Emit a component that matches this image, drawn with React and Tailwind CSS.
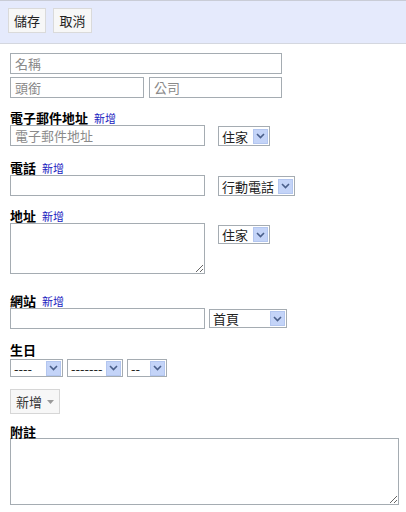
import React from "react";

const font = { fontFamily: '"Noto Sans CJK TC", "Noto Sans", sans-serif' };

function Arrow() {
  return (
    <span className="flex h-[15px] w-[15px] items-center justify-center bg-[#c4d4f8] border border-[#b3c6ef]">
      <svg width="9" height="6" viewBox="0 0 9 6">
        <path d="M1 1l3.5 3.5L8 1" fill="none" stroke="#4a5f8a" strokeWidth="1.6" />
      </svg>
    </span>
  );
}

function FakeSelect({ label, className }) {
  return (
    <div
      className={`flex items-center justify-between border border-[#a5acb2] bg-white pl-[3px] pr-[1px] text-[13px] leading-none text-[#222] ${className}`}
    >
      <span>{label}</span>
      <Arrow />
    </div>
  );
}

function TextBox({ placeholder, className }) {
  return (
    <input
      placeholder={placeholder}
      className={`h-[21px] border border-[#a5acb2] bg-white px-[4px] text-[13px] text-[#222] placeholder:text-[#8a8a8a] outline-none ${className}`}
    />
  );
}

function Label({ text, add }) {
  return (
    <div className="flex h-[15px] items-end gap-[6px] leading-none">
      <span className="text-[13px] font-bold text-black">{text}</span>
      {add && <span className="text-[11px] text-[#2020c0]">新增</span>}
    </div>
  );
}

export default function App() {
  return (
    <div className="h-[512px] w-[406px] bg-white" style={font}>
      {/* toolbar */}
      <div className="flex h-[44px] gap-[7px] border-t border-b border-t-[#c9ccd6] border-b-[#d4d7df] bg-[#e5eafc] pl-[8px] pt-[7px]">
        <button className="h-[25px] w-[38px] border border-[#dadada] bg-[#f7f7f7] text-[13px] text-[#222]">儲存</button>
        <button className="h-[25px] w-[39px] border border-[#dadada] bg-[#f7f7f7] text-[13px] text-[#222]">取消</button>
      </div>

      <div className="flex flex-col pl-[10px] pt-[9px]">
        <TextBox placeholder="名稱" className="w-[272px]" />
        <div className="mt-[3px] flex">
          <TextBox placeholder="頭銜" className="w-[134px]" />
          <TextBox placeholder="公司" className="ml-[5px] w-[133px]" />
        </div>

        {/* email */}
        <div className="mt-[11px]">
          <Label text="電子郵件地址" add />
          <div className="mt-[1px] flex items-start">
            <TextBox placeholder="電子郵件地址" className="w-[195px]" />
            <FakeSelect label="住家" className="ml-[13px] mt-[1px] h-[20px] w-[52px]" />
          </div>
        </div>

        {/* phone */}
        <div className="mt-[13px]">
          <Label text="電話" add />
          <div className="mt-[1px] flex items-start">
            <TextBox className="w-[195px]" />
            <FakeSelect label="行動電話" className="ml-[13px] mt-[1px] h-[20px] w-[77px]" />
          </div>
        </div>

        {/* address */}
        <div className="mt-[11px]">
          <Label text="地址" add />
          <div className="mt-[1px] flex items-start">
            <textarea className="h-[51px] w-[195px] border border-[#a5acb2] bg-white outline-none" />
            <FakeSelect label="住家" className="ml-[13px] mt-[2px] h-[19px] w-[52px]" />
          </div>
        </div>

        {/* website */}
        <div className="mt-[18px]">
          <Label text="網站" add />
          <div className="mt-[1px] flex items-start">
            <TextBox className="w-[195px]" />
            <FakeSelect label="首頁" className="ml-[4px] mt-[1px] h-[19px] w-[78px]" />
          </div>
        </div>

        {/* birthday */}
        <div className="mt-[12px]">
          <Label text="生日" />
          <div className="mt-[3px] flex gap-[4px]">
            <FakeSelect label="----" className="h-[18px] w-[53px]" />
            <FakeSelect label="-------" className="h-[18px] w-[56px]" />
            <FakeSelect label="--" className="h-[18px] w-[40px]" />
          </div>
        </div>

        <div className="mt-[12px]">
          <button className="flex h-[25px] w-[50px] items-center gap-[5px] border border-[#d6d6d6] bg-[#f7f7f7] pl-[5px] text-[13px] text-[#333]">
            新增
            <svg width="7" height="4" viewBox="0 0 7 4">
              <path d="M0 0h7L3.5 4z" fill="#9a9a9a" />
            </svg>
          </button>
        </div>

        {/* notes */}
        <div className="mt-[9px]">
          <Label text="附註" />
          <textarea className="block h-[67px] w-[389px] border border-[#a5acb2] bg-white outline-none" />
        </div>
      </div>
    </div>
  );
}
